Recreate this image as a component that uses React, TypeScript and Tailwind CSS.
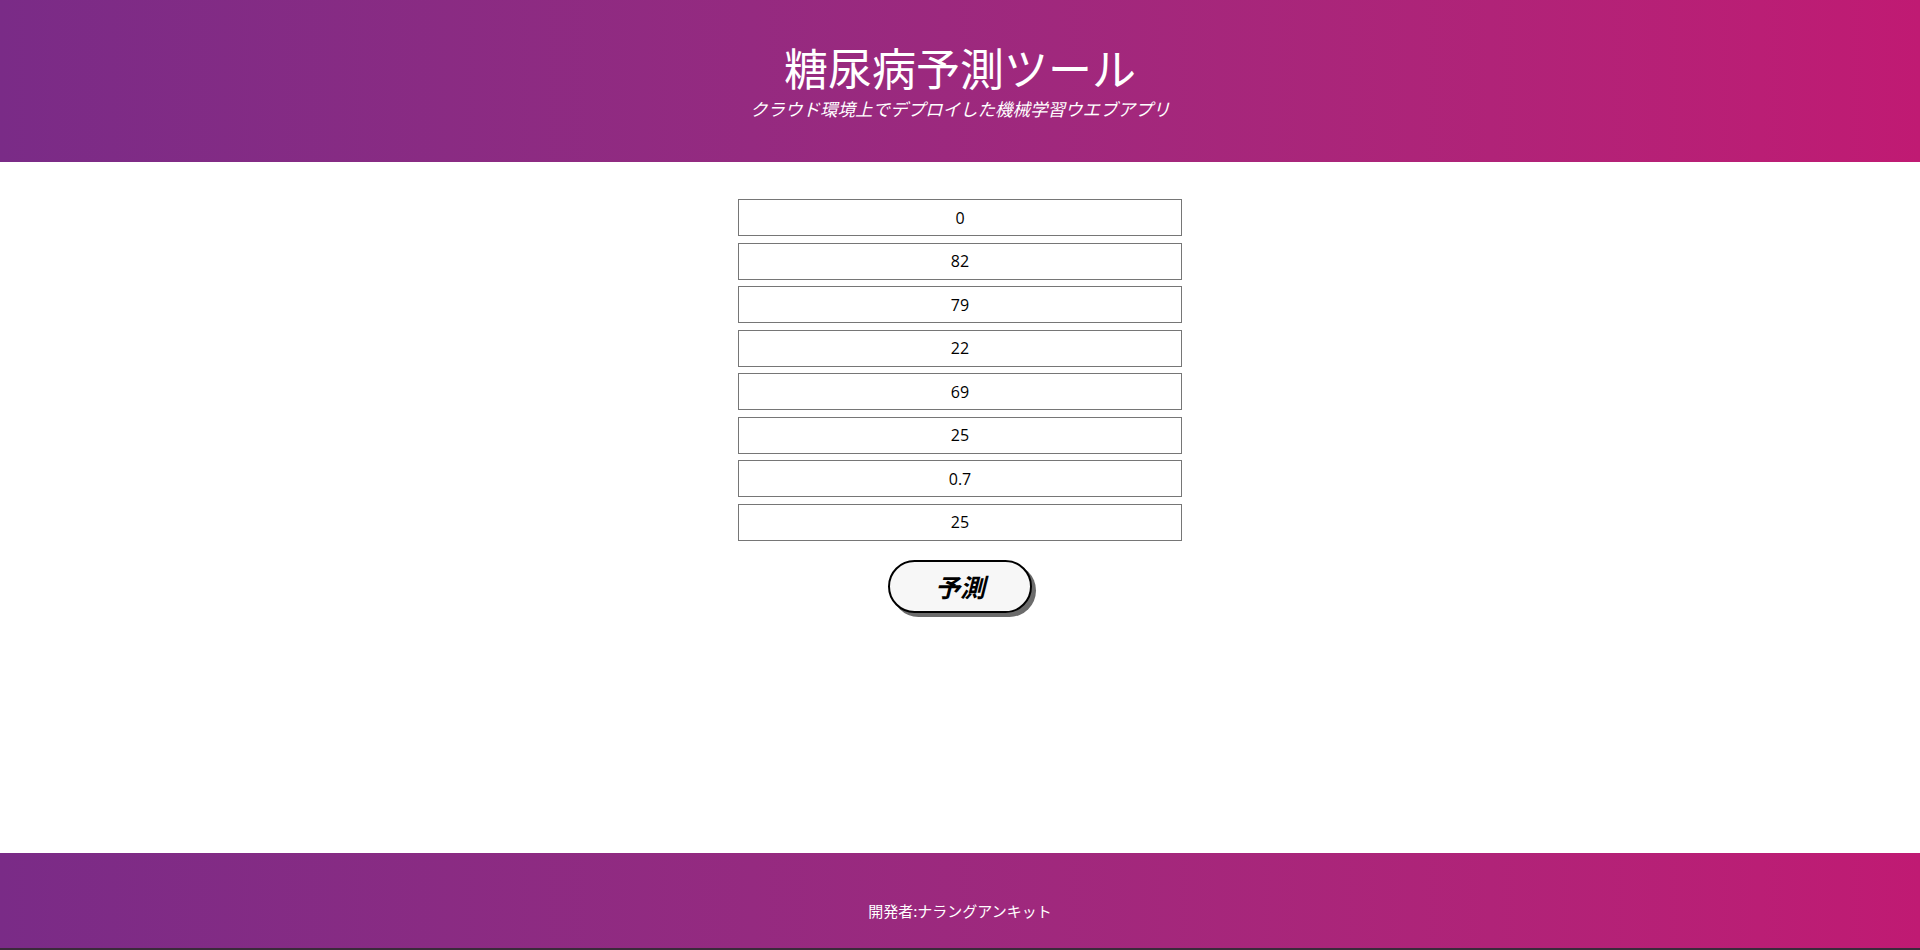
import { useState } from "react";

const initialValues = ["0", "82", "79", "22", "69", "25", "0.7", "25"];

const jpFont = "font-['Meiryo','Noto_Sans_CJK_JP','Noto_Sans',sans-serif]";

export default function App() {
  const [values, setValues] = useState(initialValues);

  return (
    <div className={`min-h-screen flex flex-col bg-white ${jpFont}`}>
      {/* Header */}
      <header className="h-[162px] bg-gradient-to-r from-[#7a2b87] to-[#c01a73] flex flex-col items-center pt-[42px] text-white">
        <h1 className="text-[44px] leading-[50px] font-normal">糖尿病予測ツール</h1>
        <p className="text-[17.5px] leading-[24px] italic mt-[5px]">クラウド環境上でデプロイした機械学習ウエブアプリ</p>
      </header>

      {/* Form */}
      <main className="flex-1 flex flex-col items-center pt-[37px]">
        <form className="flex flex-col items-center gap-[6.5px]" onSubmit={(e) => e.preventDefault()}>
          {values.map((v, i) => (
            <input
              key={i}
              type="text"
              value={v}
              onChange={(e) => {
                const next = [...values];
                next[i] = e.target.value;
                setValues(next);
              }}
              className="w-[444px] h-[37px] border border-[#767676] text-center text-[16px] text-black font-['Open_Sans','Noto_Sans_CJK_JP',sans-serif] outline-none"
            />
          ))}
          <button
            type="submit"
            className="mt-[13px] w-[144px] h-[53px] rounded-full border-2 border-black bg-[#f7f7f7] shadow-[4px_4px_0_#6b6b6b] text-[25px] leading-none font-bold italic text-black"
          >
            予測
          </button>
        </form>
      </main>

      {/* Footer */}
      <footer className="h-[97px] bg-gradient-to-r from-[#7a2b87] to-[#c01a73] border-b-2 border-[#3a2a3a] flex justify-center pt-[47px] text-white text-[15px]">
        開発者:ナラングアンキット
      </footer>
    </div>
  );
}
